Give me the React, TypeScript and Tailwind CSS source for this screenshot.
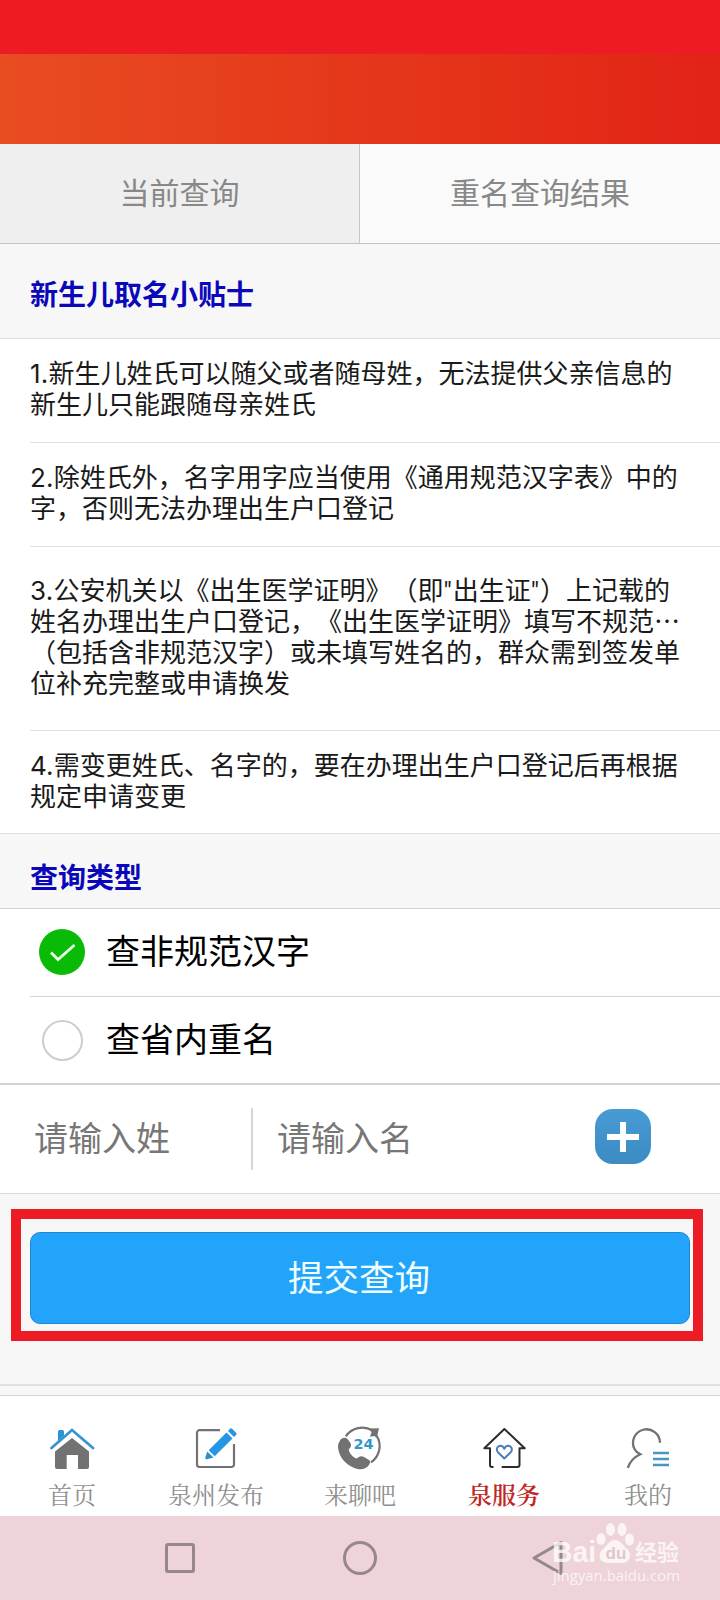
import type {ReactNode} from 'react'

const tips = [
  {
    text: '1.新生儿姓氏可以随父或者随母姓，无法提供父亲信息的\n新生儿只能跟随母亲姓氏',
    rowClass: 'h-[104px] pt-[17px]'
  },
  {
    text: '2.除姓氏外，名字用字应当使用《通用规范汉字表》中的\n字，否则无法办理出生户口登记',
    rowClass: 'h-[104px] pt-[17px]'
  },
  {
    text: '3.公安机关以《出生医学证明》（即"出生证"）上记载的\n姓名办理出生户口登记，《出生医学证明》填写不规范…\n（包括含非规范汉字）或未填写姓名的，群众需到签发单\n位补充完整或申请换发',
    rowClass: 'h-[184px] pt-[26px]'
  },
  {
    text: '4.需变更姓氏、名字的，要在办理出生户口登记后再根据\n规定申请变更',
    rowClass: 'h-[102px] pt-[17px]'
  }
]

// 序号和引号用西文字体
function TipText({text}: {text: string}) {
  return (
    <p className="whitespace-pre">
      {text.split(/(\d\.|")/).map((part, i) => {
        if (part === '"') {
          return (
            <span key={i} className="font-[Roboto] leading-none tracking-[1px]">
              {part}
            </span>
          )
        }
        return /^\d\.$/.test(part) ? (
          <span key={i} className="font-[Inter] leading-none tracking-[0.2px]">
            {part}
          </span>
        ) : (
          part
        )
      })}
    </p>
  )
}

function HomeIcon() {
  return (
    <svg viewBox="0 0 48 48" className="w-12 h-12">
      <path d="M10 17V7.500a1.500 1.500 0 0 1 1.500-1.500h3A1.500 1.500 0 0 1 16 7.500v4z" fill="#2b93d6" />
      <path d="M3.500 24 24 6 45 24" fill="none" stroke="#3695cc" strokeWidth="2.800" strokeLinecap="round" />
      <path
        d="M24 14 41 27.500V43a2 2 0 0 1-2 2h-9V31H18.700v14H9a2 2 0 0 1-2-2V27.500z"
        fill="#727272"
      />
    </svg>
  )
}

function EditIcon() {
  return (
    <svg viewBox="0 0 48 48" className="w-12 h-12">
      <path
        d="M28 6.200H7.500A2.500 2.500 0 0 0 5 8.700v31.800A2.500 2.500 0 0 0 7.500 43h32a2.500 2.500 0 0 0 2.500-2.500V20"
        fill="none"
        stroke="#727272"
        strokeWidth="2.200"
      />
      <path d="m34.500 8.500 6 6L22.700 32.200l-6-6z" fill="#2496e3" />
      <path d="m36 7 2-2.200q1-1 2.100 0l4.200 4.100q.8 1-.2 2L42 13z" fill="#2496e3" />
      <path d="m15.300 27.400 6.200 6-6.400 1.800q-2.200.4-1.800-1.800z" fill="#2b8fcd" />
    </svg>
  )
}

function PhoneIcon() {
  return (
    <svg viewBox="0 0 48 48" className="w-12 h-12">
      <path d="M9.800 12.300A20 20 0 0 1 36.500 6.500" fill="none" stroke="#727272" strokeWidth="2.200" />
      <path d="M40.500 11.500A19.500 19.500 0 0 1 35 38.300" fill="none" stroke="#727272" strokeWidth="2.200" />
      <path d="m32.500 4.500 10.500-.3-2.300 9.800-2.200-2-4.500.8 1.600-4.500z" fill="#727272" />
      <path
        d="M3.500 17.500c1.600-3.800 6-5 8.600-1.800l2.200 3c1.600 2.600.2 5-1.600 6.600.8 4.500 4 8 8.200 9.300 1.600-2.200 4.500-3.200 7.100-1.600l5 3c1.600 1.200 1.400 2.500.4 4.200-2.200 3.700-6.200 5.600-10.600 5C12 43.500 2.500 34 2 23c-.1-2.200.5-4 1.500-5.500z"
        fill="#727272"
      />
      <text
        x="17.500"
        y="25"
        textLength="20"
        lengthAdjust="spacingAndGlyphs"
        fontFamily="DejaVu Sans"
        fontWeight="700"
        fontSize="14"
        fill="#3297cb">
        24
      </text>
    </svg>
  )
}

function ServiceIcon() {
  return (
    <svg viewBox="0 0 48 48" className="w-12 h-12" fill="none" strokeLinejoin="round">
      <path
        d="M13.500 43H12a2 2 0 0 1-2-2V24.300H4.300L24.400 5l20.300 19.300h-5.200V41a2 2 0 0 1-2 2H21.700"
        stroke="#2c2c2f"
        strokeWidth="2"
      />
      <path
        d="M24.300 34.500 18 28.200c-2.400-2.700-.6-6.400 2.300-6.400 2 0 3.300 1.200 4 3 .7-1.800 2.100-3 4-3 3 0 4.800 3.700 2.400 6.400z"
        stroke="#4a7fb5"
        strokeWidth="2"
      />
    </svg>
  )
}

function MineIcon() {
  return (
    <svg viewBox="0 0 48 48" className="w-12 h-12" fill="none">
      <path
        d="M36 18.700A13.500 13.500 0 1 0 10.600 25.200C12 27.700 13.600 29 16.300 30.300 10.500 33 6 37.500 3.800 43.800"
        stroke="#727272"
        strokeWidth="2.300"
      />
      <path d="M29 29h16M29 35h16M29 41h16" stroke="#4a96bd" strokeWidth="2.300" />
    </svg>
  )
}

const navItems = [
  {label: '首页', Icon: HomeIcon},
  {label: '泉州发布', Icon: EditIcon},
  {label: '来聊吧', Icon: PhoneIcon},
  {label: '泉服务', Icon: ServiceIcon, active: true},
  {label: '我的', Icon: MineIcon}
]

function SectionTitle({className, children}: {className: string; children: ReactNode}) {
  return (
    <h2 className={`flex items-center bg-[#f7f7f8] pl-[30px] text-[28px] font-bold text-[#0a08b8] ${className}`}>
      {children}
    </h2>
  )
}

export default function App() {
  return (
    <div className="flex flex-col w-[720px] h-[1600px] overflow-hidden bg-[#f7f7f7] font-['Noto_Sans_CJK_SC',sans-serif] [text-spacing-trim:space-all]">
      {/* 状态栏 + 标题栏 */}
      <div className="h-[54px] shrink-0 bg-[#ed1c24]" />
      <div className="h-[90px] shrink-0 bg-linear-to-r from-[#e84c21] via-[#e5371b] to-[#e22216]" />

      {/* 标签页 */}
      <div className="grid h-[100px] shrink-0 grid-cols-2 border-b border-[#c4c4c4] text-[30px] text-[#888]">
        <div className="flex items-center justify-center border-r border-[#c8c8c8] bg-[#efefef] pb-[5px]">当前查询</div>
        <div className="flex items-center justify-center bg-[#fafafa] pb-[5px]">重名查询结果</div>
      </div>

      <SectionTitle className="h-[95px] shrink-0 border-b border-[#dfdfdf] pt-[4px]">新生儿取名小贴士</SectionTitle>

      {/* 小贴士列表 */}
      <div className="shrink-0 border-b border-[#e0e0e0] bg-white pl-[30px] text-[26px] leading-[31px] text-[#1a1a1a]">
        {tips.map(tip => (
          <div key={tip.text} className={`border-b border-[#e0e0e0] last:border-b-0 ${tip.rowClass}`}>
            <TipText text={tip.text} />
          </div>
        ))}
      </div>

      <SectionTitle className="h-[75px] shrink-0 border-b border-[#d5d5d5] pt-[10px]">查询类型</SectionTitle>

      {/* 查询类型 */}
      <div className="shrink-0 border-b-2 border-[#d3d3d3] bg-white pl-[30px] text-[34px] text-black">
        <div className="flex h-[88px] items-center border-b border-[#d4d4d4] pb-px pl-[9px]">
          <span className="flex h-[46px] w-[46px] items-center justify-center rounded-full bg-[#09bb07]">
            <svg viewBox="0 0 46 46" className="h-[46px] w-[46px]">
              <path d="m12 23.500 7 7L35.500 16" fill="none" stroke="#e9ffe6" strokeWidth="2.800" />
            </svg>
          </span>
          <span className="pb-[5px] pl-[21px]">查非规范汉字</span>
        </div>
        <div className="flex h-[86px] items-center pl-[12px]">
          <span className="h-[41px] w-[41px] rounded-full border-2 border-[#cdcdcd]" />
          <span className="pb-[6px] pl-[23px]">查省内重名</span>
        </div>
      </div>

      {/* 姓名输入 */}
      <div className="flex h-[109px] shrink-0 items-center border-b border-[#d9d9d9] bg-white text-[34px] text-[#777]">
        <div className="flex h-[62px] w-[253px] items-center border-r-2 border-[#d6d6d6] pb-[5px] pl-[34px]">请输入姓</div>
        <div className="w-[342px] pb-[5px] pl-[24px]">请输入名</div>
        <button className="mb-[5px] flex h-[55px] w-[56px] items-center justify-center rounded-[18px] bg-linear-to-b from-[#479bd3] to-[#3c8bc3]">
          <svg viewBox="0 0 32 32" className="h-8 w-8">
            <path d="M0 16h32M16 1v30" stroke="#fff" strokeWidth="6" />
          </svg>
        </button>
      </div>

      {/* 提交 */}
      <div className="h-[190px] shrink-0 pt-[15px] pl-[11px]">
        <div className="h-[132px] w-[692px] border-[10px] border-[#ed1c24] pt-[13px] pl-[9px]">
          <button className="flex h-[92px] w-[660px] items-center justify-center rounded-[10px] border border-[#2286c9] bg-[#23a4fb] pr-[2px] pb-[4px] text-[35.500px] text-[#f0ffff]">
            提交查询
          </button>
        </div>
      </div>
      <div className="h-[12px] shrink-0 border-t-2 border-b border-t-[#e0e0e0] border-b-[#d8d8d8]" />

      {/* 底部导航 */}
      <nav className="grid h-[120px] shrink-0 grid-cols-5 bg-white pt-[28px]">
        {navItems.map(({label, Icon, active}) => (
          <div key={label} className="flex flex-col items-center">
            <Icon />
            <span
              className={`mt-[5px] font-['Noto_Serif_CJK_SC','Noto_Sans_CJK_SC',serif] text-[24px] leading-[34px] ${
                active ? 'font-semibold text-[#c2261f]' : 'text-[#8f8f8f]'
              }`}>
              {label}
            </span>
          </div>
        ))}
      </nav>

      {/* 系统按键 */}
      <div className="relative h-[84px] shrink-0 bg-[#eed3d8]">
        <div className="flex h-full items-center">
          <svg viewBox="0 0 720 84" className="h-[84px] w-[720px]" fill="none" stroke="#96878a" strokeWidth="3">
            <rect x="166.500" y="28.500" width="27" height="27" rx="1.500" />
            <circle cx="360" cy="42" r="15.500" />
            <path d="M534 42 561 26.500v31z" strokeLinejoin="round" />
          </svg>
        </div>
        {/* 水印 */}
        <div className="absolute top-0 left-[550px] h-[84px] w-[140px] opacity-75">
          <svg viewBox="0 0 140 84" className="h-[84px] w-[140px]" fill="#fff">
            <text x="2" y="46" fontFamily="Liberation Sans" fontWeight="700" fontSize="29" textLength="44" lengthAdjust="spacingAndGlyphs">
              Bai
            </text>
            <ellipse cx="51" cy="23" rx="4.500" ry="6" />
            <ellipse cx="60.500" cy="13.500" rx="4.500" ry="6.500" />
            <ellipse cx="72" cy="13.500" rx="4.500" ry="6.500" />
            <ellipse cx="79.500" cy="23.500" rx="4.500" ry="6" />
            <path d="M65 24c6 0 8 6 12 9 5 4 4 14-5 14H58c-9 0-11-9-5-14 4-3 6-9 12-9z" />
            <text x="55.500" y="43" fontFamily="Liberation Sans" fontWeight="700" fontSize="17" fill="#dcc3c8">
              du
            </text>
            <text x="85" y="44" fontFamily="Noto Sans CJK SC" fontWeight="700" fontSize="22">
              经验
            </text>
            <text x="3" y="65" fontFamily="Open Sans" fontSize="15" textLength="127" lengthAdjust="spacingAndGlyphs">
              jingyan.baidu.com
            </text>
          </svg>
        </div>
      </div>
    </div>
  )
}
